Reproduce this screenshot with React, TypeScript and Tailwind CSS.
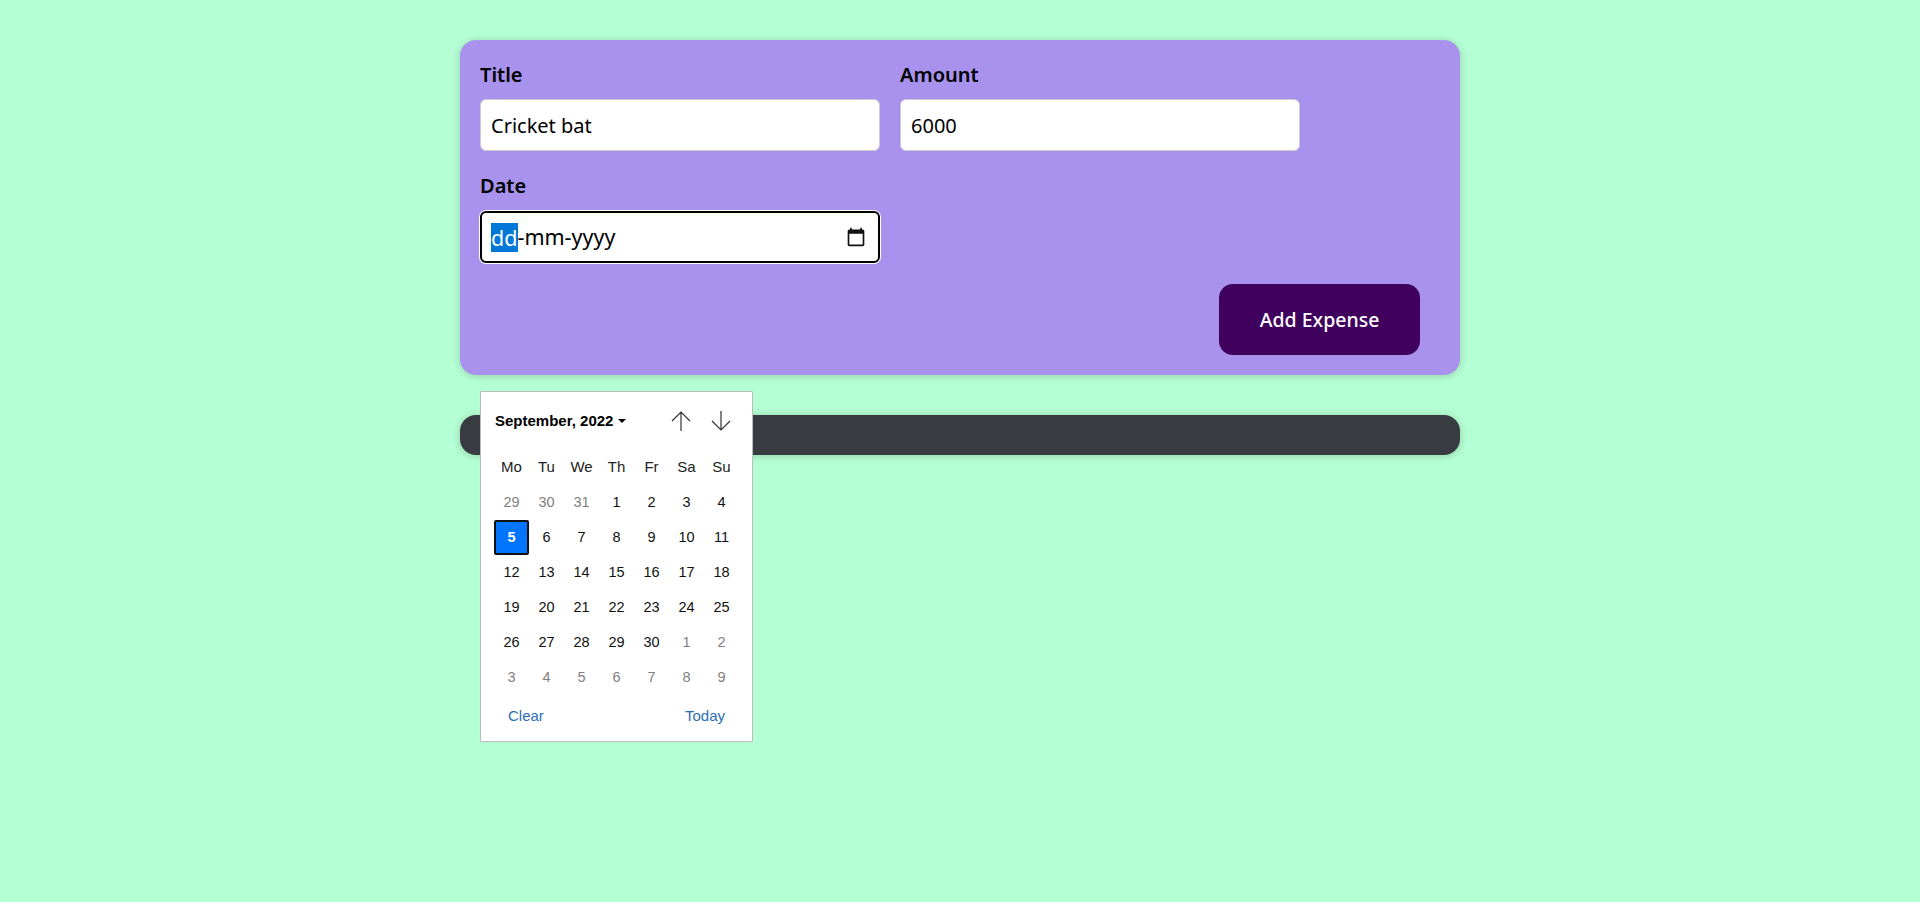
const weeks = [
  ["29", "30", "31", "1", "2", "3", "4"],
  ["5", "6", "7", "8", "9", "10", "11"],
  ["12", "13", "14", "15", "16", "17", "18"],
  ["19", "20", "21", "22", "23", "24", "25"],
  ["26", "27", "28", "29", "30", "1", "2"],
  ["3", "4", "5", "6", "7", "8", "9"],
];
const weekdays = ["Mo", "Tu", "We", "Th", "Fr", "Sa", "Su"];

function isOtherMonth(row: number, day: number) {
  return (row === 0 && day > 20) || (row === 4 && day < 10) || row === 5;
}

function Arrow({ up }: { up?: boolean }) {
  return (
    <svg width="22" height="22" viewBox="0 0 22 22" fill="none" stroke="#333" strokeWidth="1.2">
      {up ? <path d="M11 21V2M2 11l9-9 9 9" /> : <path d="M11 1v19M2 11l9 9 9-9" />}
    </svg>
  );
}

function DatePopup() {
  return (
    <div className="absolute left-0 top-[220px] z-10 h-[351px] w-[273px] rounded-[1px] border border-[#bcbcbc] bg-white pl-[13px] pr-[12px] font-['Liberation_Sans',sans-serif] text-[14.5px] text-[#111]">
      {/* Month header */}
      <div className="flex h-[58px] items-center justify-between">
        <div className="flex items-center gap-[5px] pl-px text-[15px] font-bold text-black">
          <span>September, 2022</span>
          <span className="h-0 w-0 border-x-[4.5px] border-t-[4.5px] border-x-transparent border-t-black" />
        </div>
        <div className="mr-[8px] flex items-center gap-[18px]">
          <Arrow up />
          <Arrow />
        </div>
      </div>

      {/* Calendar grid */}
      <div className="grid grid-cols-[repeat(7,35px)] auto-rows-[35px] items-center justify-items-center">
        {weekdays.map((d) => (
          <span key={d} className="text-[15px] text-[#222]">{d}</span>
        ))}
        {weeks.map((week, row) =>
          week.map((day, i) => {
            const key = `${row}-${i}`;
            if (day === "5" && row === 1) {
              return (
                <span
                  key={key}
                  className="flex h-[35px] w-[35px] items-center justify-center rounded-[2px] border-2 border-[#111] bg-[#0075ff] font-bold text-white"
                >
                  {day}
                </span>
              );
            }
            return (
              <span key={key} className={isOtherMonth(row, Number(day)) ? "text-[#808080]" : "text-[#111]"}>
                {day}
              </span>
            );
          })
        )}
      </div>

      {/* Footer */}
      <div className="flex justify-between pl-[14px] pr-[15px] pt-[10px] text-[15px] text-[#2a6fb5]">
        <span>Clear</span>
        <span>Today</span>
      </div>
    </div>
  );
}

export default function App() {
  return (
    <div className="min-h-[902px] bg-[#b5ffd4] pt-10 font-['Noto_Sans',sans-serif] text-black">
      <form className="mx-auto h-[335px] w-[1000px] rounded-2xl bg-[#a892ee] p-5 shadow-[0_1px_8px_rgba(0,0,0,0.2)]">
        <div className="flex flex-wrap gap-x-5 gap-y-5">
          <div className="w-[400px]">
            <label className="mb-[10px] mt-px block text-[20px] font-semibold leading-[28px]">Title</label>
            <input
              readOnly
              value="Cricket bat"
              className="h-[52px] w-full rounded-md border border-[#ccc] bg-white px-[10px] text-[20px] outline-none"
            />
          </div>
          <div className="w-[400px]">
            <label className="mb-[10px] mt-px block text-[20px] font-semibold leading-[28px]">Amount</label>
            <input
              readOnly
              value="6000"
              className="h-[52px] w-full rounded-md border border-[#ccc] bg-white px-[10px] text-[20px] outline-none"
            />
          </div>
          <div className="relative w-[400px]">
            <label className="mb-[11px] mt-px block text-[20px] font-semibold leading-[28px]">Date</label>
            <div className="flex h-[52px] w-full items-center justify-between rounded-md border-2 border-black bg-white pl-[9px] pr-[12px] text-[21.5px] shadow-[0_0_0_1px_#fff]">
              <div className="flex items-center">
                <span className="bg-[#0078d7] pr-px leading-[29px] text-white">dd</span>
                <span className="-ml-px">-mm-yyyy</span>
              </div>
              <svg width="20" height="20" viewBox="0 0 24 24" fill="#111">
                <path d="M20 3h-1V1h-2v2H7V1H5v2H4c-1.1 0-2 .9-2 2v16c0 1.1.9 2 2 2h16c1.1 0 2-.9 2-2V5c0-1.1-.9-2-2-2zm0 18H4V8h16v13z" />
              </svg>
            </div>
            <DatePopup />
          </div>
        </div>
        <div className="mt-[21px] flex justify-end pr-5">
          <button
            type="button"
            className="h-[71px] w-[201px] rounded-[14px] bg-[#40005d] text-[19.5px] font-medium text-white"
          >
            Add Expense
          </button>
        </div>
      </form>
      <div className="mx-auto mt-10 h-10 w-[1000px] rounded-2xl bg-[#393b42] shadow-[0_1px_8px_rgba(0,0,0,0.2)]" />
    </div>
  );
}
